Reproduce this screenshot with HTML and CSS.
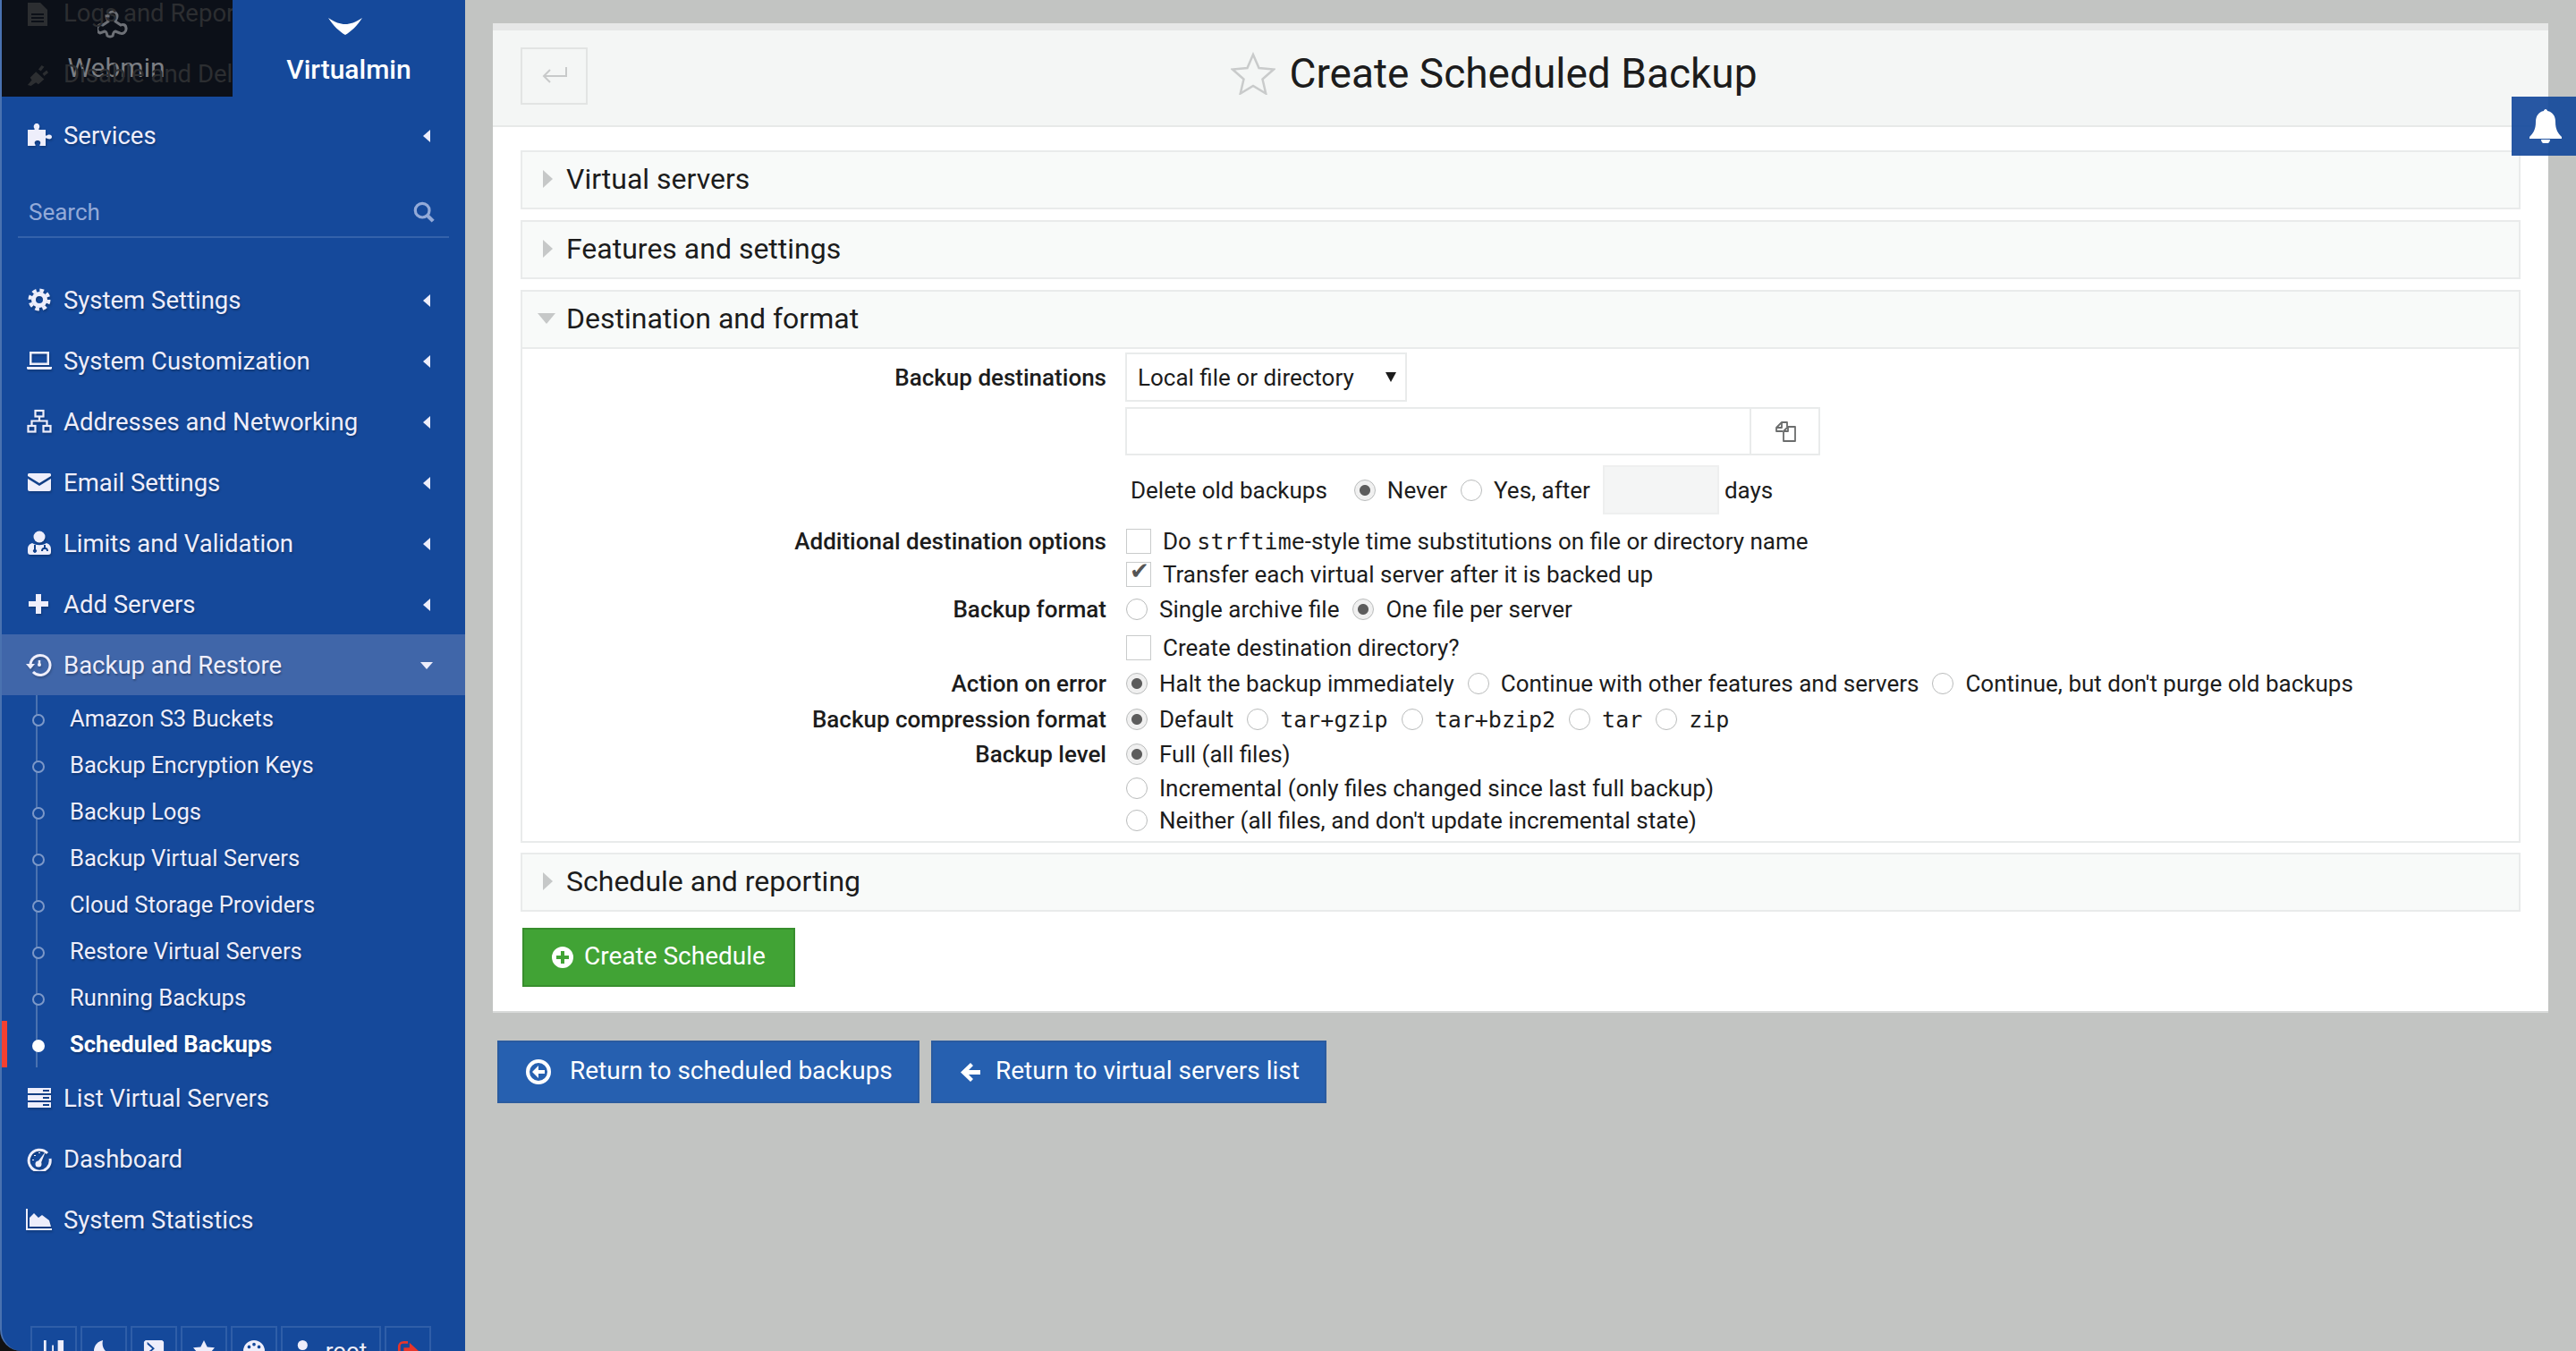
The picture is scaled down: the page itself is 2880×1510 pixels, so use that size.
FILE: index.html
```html
<!DOCTYPE html>
<html lang="en">
<head>
    <meta charset="UTF-8">
    <meta name="viewport" content="width=device-width, initial-scale=1.0">
    <title>Create Scheduled Backup</title>
    <link rel="stylesheet" href="styles.css">
</head>
<body>
    <aside class="sidebar">
        <div class="tabs">
            <div class="tab tab-off">
                <span class="ghost ghost-one">Logs and Reports</span>
                <span class="ghost ghost-two">Disable and Delete</span>
                <svg class="ghost-ico ghost-ico-one" viewBox="0 0 22 26"><path d="M0 0h14l8 8v18H0zM4 12v2h14v-2zM4 16v2h14v-2zM4 20v2h14v-2z" fill-rule="evenodd"/></svg>
                <svg class="ghost-ico ghost-ico-two" viewBox="0 0 26 26"><path d="M1 25l5-6-2-3 7-7 10 9-7 6-3-2-6 4zM14 6l4-5 3 2-4 5zM19 11l5-4 2 3-5 4z"/></svg>
                <svg class="tab-ico" viewBox="0 0 34 34" fill="none" stroke="currentColor" stroke-width="3"><path d="M12 7a5 5 0 0 1 10 0c0 3-2 4-2 6l6 4c2-1 6-1 6 4a5 5 0 0 1-7 5l-5-2c-2 0-3 5-3 5s-1 1-3 1-3-1-3-1-1-5-3-5l-5 2a5 5 0 0 1-1-9c2-1 3 0 4 0l6-4c0-2-2-3-2-6z"/></svg>
                <span>Webmin</span>
            </div>
            <div class="tab tab-on">
                <svg class="tab-mark" viewBox="0 0 38 20"><path d="M0 0c8 5 13 7 19 7s11-2 19-7C32 9 26 15 19 19 12 15 6 9 0 0z"/></svg>
                <span>Virtualmin</span>
            </div>
        </div>

        <a class="nav-row nav-services">
            <svg class="ico" viewBox="0 0 28 28"><path d="M1 8h7c1 0 1-1 0-2-1-3 1-5 3-5s4 2 3 5c-1 1-1 2 0 2h7v6c0 1 1 1 2 0 3-1 5 0 5 2s-2 3-5 2c-1-1-2-1-2 0v8h-6c-1 0-1-1 0-2 1-3-1-4-3-4s-4 1-3 4c1 1 1 2 0 2H1z"/></svg>
            <span class="nav-text">Services</span><i class="caret"></i>
        </a>

        <div class="search">
            <span>Search</span>
            <svg class="search-ico" viewBox="0 0 26 26" fill="none" stroke="currentColor"><circle cx="11" cy="11" r="8.500" stroke-width="3.500"/><path d="M17 17l7 7" stroke-width="4.500"/></svg>
        </div>

        <nav class="nav">
            <a class="nav-row">
                <svg class="ico" viewBox="0 0 28 28" fill="none" stroke="currentColor"><circle cx="14" cy="14" r="6.500" stroke-width="5"/><circle cx="14" cy="14" r="10.500" stroke-width="4" stroke-dasharray="4.600 3.650"/></svg>
                <span class="nav-text">System Settings</span><i class="caret"></i>
            </a>
            <a class="nav-row">
                <svg class="ico" viewBox="0 0 28 28"><path d="M3 4h22v15H3zM5.500 6.500v10h17v-10zM0 21h28v2l-1 1H1l-1-1z" fill-rule="evenodd"/></svg>
                <span class="nav-text">System Customization</span><i class="caret"></i>
            </a>
            <a class="nav-row">
                <svg class="ico" viewBox="0 0 28 28" fill="none" stroke="currentColor" stroke-width="2.200"><rect x="9.500" y="2" width="9" height="6.500"/><rect x="1.500" y="19" width="8" height="6.500"/><rect x="18.500" y="19" width="8" height="6.500"/><path d="M14 8.500v5M5.500 19v-5.500h17V19"/></svg>
                <span class="nav-text">Addresses and Networking</span><i class="caret"></i>
            </a>
            <a class="nav-row">
                <svg class="ico" viewBox="0 0 28 28"><path d="M3 4h22a2 2 0 0 1 2 1v2l-13 8L1 7V5a2 2 0 0 1 2-1zM1 10l13 8 13-8v12a2 2 0 0 1-2 2H3a2 2 0 0 1-2-2z"/></svg>
                <span class="nav-text">Email Settings</span><i class="caret"></i>
            </a>
            <a class="nav-row">
                <svg class="ico" viewBox="0 0 28 28"><circle cx="14" cy="7" r="6.500"/><path d="M6 14c5 3 11 3 16 0 3 1 5 3 5 7v3c0 2-1 3-3 3H4c-2 0-3-1-3-3v-3c0-4 2-6 5-7zM8 16v5a2 2 0 1 0 2 0v-5zM19 16v3c-2 0-3 2-3 4h2c0-2 1-2 2-2s2 0 2 2h2c0-2-1-4-3-4v-3z" fill-rule="evenodd"/></svg>
                <span class="nav-text">Limits and Validation</span><i class="caret"></i>
            </a>
            <a class="nav-row">
                <svg class="ico" viewBox="0 0 28 28"><path d="M10 3h6v8h8v6h-8v8h-6v-8H2v-6h8z"/></svg>
                <span class="nav-text">Add Servers</span><i class="caret"></i>
            </a>
            <a class="nav-row nav-open">
                <svg class="ico ico-wide" viewBox="0 0 30 28" fill="none" stroke="currentColor" stroke-width="3"><path d="M6 14a11 11 0 1 1 3 8"/><path d="M1 13h10l-5 6z" fill="currentColor" stroke="none"/><path d="M16 9v6" stroke-width="2.500"/><circle cx="16" cy="14" r="2" fill="currentColor" stroke="none"/></svg>
                <span class="nav-text">Backup and Restore</span><i class="caret-down"></i>
            </a>
            <ul class="subnav">
                <li>Amazon S3 Buckets</li>
                <li>Backup Encryption Keys</li>
                <li>Backup Logs</li>
                <li>Backup Virtual Servers</li>
                <li>Cloud Storage Providers</li>
                <li>Restore Virtual Servers</li>
                <li>Running Backups</li>
                <li class="sub-active">Scheduled Backups</li>
            </ul>
            <a class="nav-row">
                <svg class="ico" viewBox="0 0 28 28"><path d="M1 3h26v6H1zM18 5v2h7V5zM1 11h26v6H1zM18 13v2h7v-2zM1 19h26v6H1zM18 21v2h7v-2z" fill-rule="evenodd"/></svg>
                <span class="nav-text">List Virtual Servers</span>
            </a>
            <a class="nav-row">
                <svg class="ico" viewBox="0 0 28 28" fill="none" stroke="currentColor"><path d="M23 8a12 12 0 1 0 3 6" stroke-width="3"/><path d="M11 19l10-13-6 15z" fill="currentColor" stroke="none"/><circle cx="13" cy="20" r="3.500" fill="currentColor" stroke="none"/><path d="M7 15v1M9 10v1M14 7v1" stroke-width="2"/></svg>
                <span class="nav-text">Dashboard</span>
            </a>
            <a class="nav-row">
                <svg class="ico ico-wide" viewBox="0 0 30 28"><path d="M1 2h2v22h27v2H1zM5 22V12l5-5 5 5 4-3 8 6 2 7z"/></svg>
                <span class="nav-text">System Statistics</span>
            </a>
        </nav>

        <div class="toolbar">
            <span class="tool"><svg class="tool-ico" viewBox="0 0 26 26"><path d="M1 0h3v26H1zM18 0h7v26h-7zM13 6v8l-5 3 5 3v6h-2V6z"/></svg></span>
            <span class="tool"><svg class="tool-ico" viewBox="0 0 26 26"><path d="M12 0A13 13 0 1 0 26 18C19 19 9 10 12 0z"/></svg></span>
            <span class="tool"><svg class="tool-ico" viewBox="0 0 26 26"><path d="M3 0h20l2 2v24H1V2zM5 5l6 5-6 5v3l9-8-9-8zM13 16v3h8v-3z" fill-rule="evenodd"/></svg></span>
            <span class="tool"><svg class="tool-ico" viewBox="0 0 26 26"><path d="M13 0l4 8 9 1-6 7 2 9-9-4-9 4 2-9-6-7 9-1z"/></svg></span>
            <span class="tool"><svg class="tool-ico" viewBox="0 0 26 26"><path d="M13 0a13 13 0 1 0 0 26A13 13 0 0 0 13 0zM7 6a2 2 0 1 1 0 4 2 2 0 0 1 0-4zM13 3a2 2 0 1 1 0 4 2 2 0 0 1 0-4zM19 6a2 2 0 1 1 0 4 2 2 0 0 1 0-4z" fill-rule="evenodd"/></svg></span>
            <span class="tool tool-user"><svg class="tool-ico" viewBox="0 0 26 26"><circle cx="9" cy="6" r="6"/><path d="M0 26v-6c0-4 3-6 5-6 3 2 5 2 8 0l3 2-2 4 2 6z"/><circle cx="21" cy="21" r="5"/></svg>root</span>
            <span class="tool tool-exit"><svg class="tool-ico" viewBox="0 0 26 26"><path d="M8 1h5v3H7C5 4 4 5 4 7v12c0 2 1 3 3 3h6v3H8c-4 0-7-3-7-7V8c0-4 3-7 7-7zM15 3l11 10-11 10v-6H8V9h7z"/></svg></span>
        </div>
    </aside>

    <main class="main">
        <div class="panel">
            <header class="panel-head">
                <a class="back-btn">
                    <svg viewBox="0 0 28 22" fill="none" stroke="currentColor" stroke-width="2"><path d="M27 1v10H3M9 4l-7 7 7 7"/></svg>
                </a>
                <h1 class="title">
                    <svg class="star" viewBox="0 0 50 48" fill="none" stroke="currentColor" stroke-width="2.500"><path d="M25 3l6.500 15 16.500 1.500-12.500 11 3.700 16L25 38l-14.200 8.500 3.700-16L2 19.500 18.500 18z"/></svg>
                    Create Scheduled Backup
                </h1>
            </header>

            <div class="panel-body">
                <section class="box">
                    <div class="box-head"><i class="tri-right"></i>Virtual servers</div>
                </section>
                <section class="box">
                    <div class="box-head"><i class="tri-right"></i>Features and settings</div>
                </section>
                <section class="box box-open">
                    <div class="box-head box-head-open"><i class="tri-down"></i>Destination and format</div>
                    <div class="form">
                        <div class="row row-select">
                            <label>Backup destinations</label>
                            <div class="val"><div class="select">Local file or directory</div></div>
                        </div>
                        <div class="row row-path mt6">
                            <label></label>
                            <div class="val"><input class="path" type="text"><span class="path-btn"><svg viewBox="0 0 24 24" fill="none" stroke="currentColor" stroke-width="1.800" stroke-linejoin="round"><path d="M9 12H2V8l6-6h6v5"/><path d="M8 2v6H2"/><path d="M15 7h8v16H10V12z"/><path d="M15 7v5h-5"/></svg></span></div>
                        </div>
                        <div class="row row-select mt11">
                            <label></label>
                            <div class="val val-delete">
                                <span class="delete-text">Delete old backups</span>
                                <input class="radio" type="radio" name="del" checked><span class="opt opt-never">Never</span>
                                <input class="radio" type="radio" name="del"><span class="opt opt-yes">Yes, after</span>
                                <input class="days" type="text"><span>days</span>
                            </div>
                        </div>
                        <div class="row mt12">
                            <label>Additional destination options</label>
                            <div class="val"><input class="check" type="checkbox"><span>Do <code>strftime</code>-style time substitutions on file or directory name</span></div>
                        </div>
                        <div class="row mt1">
                            <label></label>
                            <div class="val"><input class="check" type="checkbox" checked><span>Transfer each virtual server after it is backed up</span></div>
                        </div>
                        <div class="row mt3">
                            <label>Backup format</label>
                            <div class="val">
                                <input class="radio" type="radio" name="fmt"><span class="opt">Single archive file</span>
                                <input class="radio" type="radio" name="fmt" checked><span class="opt">One file per server</span>
                            </div>
                        </div>
                        <div class="row mt7">
                            <label></label>
                            <div class="val"><input class="check" type="checkbox"><span>Create destination directory?</span></div>
                        </div>
                        <div class="row mt4">
                            <label>Action on error</label>
                            <div class="val">
                                <input class="radio" type="radio" name="err" checked><span class="opt">Halt the backup immediately</span>
                                <input class="radio" type="radio" name="err"><span class="opt">Continue with other features and servers</span>
                                <input class="radio" type="radio" name="err"><span class="opt">Continue, but don't purge old backups</span>
                            </div>
                        </div>
                        <div class="row mt4">
                            <label>Backup compression format</label>
                            <div class="val">
                                <input class="radio" type="radio" name="cmp" checked><span class="opt">Default</span>
                                <input class="radio" type="radio" name="cmp"><code class="opt">tar+gzip</code>
                                <input class="radio" type="radio" name="cmp"><code class="opt">tar+bzip2</code>
                                <input class="radio" type="radio" name="cmp"><code class="opt">tar</code>
                                <input class="radio" type="radio" name="cmp"><code class="opt">zip</code>
                            </div>
                        </div>
                        <div class="row mt3">
                            <label>Backup level</label>
                            <div class="val"><input class="radio" type="radio" name="lvl" checked><span class="opt">Full (all files)</span></div>
                        </div>
                        <div class="row mt2">
                            <label></label>
                            <div class="val"><input class="radio" type="radio" name="lvl"><span class="opt">Incremental (only files changed since last full backup)</span></div>
                        </div>
                        <div class="row">
                            <label></label>
                            <div class="val"><input class="radio" type="radio" name="lvl"><span class="opt">Neither (all files, and don't update incremental state)</span></div>
                        </div>
                    </div>
                </section>
                <section class="box">
                    <div class="box-head"><i class="tri-right"></i>Schedule and reporting</div>
                </section>
                <button class="btn btn-create">
                    <svg viewBox="0 0 24 24"><path d="M12 0a12 12 0 1 0 0 24 12 12 0 0 0 0-24zM10 5h4v5h5v4h-5v5h-4v-5H5v-4h5z" fill-rule="evenodd"/></svg>
                    <span class="btn-label">Create Schedule</span>
                </button>
            </div>
        </div>

        <div class="returns">
            <button class="btn btn-return">
                <svg viewBox="0 0 28 28"><path d="M14 0a14 14 0 1 0 0 28 14 14 0 0 0 0-28zM14 4a10 10 0 1 1 0 20 10 10 0 0 1 0-20zM14 7l-7 7 7 7v-5h7v-4h-7z" fill-rule="evenodd"/></svg>
                <span class="btn-label">Return to scheduled backups</span>
            </button>
            <button class="btn btn-return btn-return-list">
                <svg viewBox="0 0 24 24"><path d="M12 2l3 3-5 5h13v5H10l5 5-3 3L1 12.500z"/></svg>
                <span class="btn-label">Return to virtual servers list</span>
            </button>
        </div>
    </main>

    <div class="bell">
        <svg viewBox="0 0 36 38"><path d="M18 0c1 0 2 1 2 2 6 1 9 6 9 12 0 9 3 13 7 17v2H0v-2c4-4 7-8 7-17 0-6 3-11 9-12 0-1 1-2 2-2zM13 34h10a5 5 0 0 1-10 0z"/></svg>
    </div>
</body>
</html>
```

FILE: styles.css
```css
* {
    box-sizing: border-box;
}

html, body {
    height: 100%;
}

body {
    margin: 0;
    height: 1510px;
    overflow: hidden;
    display: flex;
    background-color: #c2c4c2;
    color: #1c1c1c;
    font: 26px Roboto, "Liberation Sans", sans-serif;
}

svg {
    display: block;
}

svg:not([fill]) {
    fill: currentColor;
}

code {
    font-family: "DejaVu Sans Mono", "Liberation Mono", monospace;
    font-size: 25px;
}

/* Sidebar */
.sidebar {
    flex: 0 0 520px;
    height: 1510px;
    display: flex;
    flex-direction: column;
    overflow: hidden;
    background-color: #15499b;
    border-left: 2px solid #4a72b0;
    border-bottom-left-radius: 24px;
    box-shadow: -20px 20px 0 #111;
    color: #eeeefb;
    text-shadow: 1px 2px 2px rgba(0, 0, 0, 0.25);
}

.tabs {
    display: flex;
    height: 108px;
    margin-left: -2px;
    margin-bottom: 9px;
    flex: none;
}

.tab {
    position: relative;
    width: 260px;
    display: flex;
    flex-direction: column;
    align-items: center;
    font-size: 30px;
    text-shadow: none;
}

.tab-off {
    overflow: hidden;
    background-color: #0c1018;
    color: #6d7076;
    padding-top: 11px;
}

.tab-off > span:last-child {
    margin-top: 13px;
    color: #7c7f84;
}

.tab-on {
    padding-top: 20px;
    color: #fff;
    font-weight: 500;
}

.tab-mark {
    width: 38px;
    height: 20px;
    margin-bottom: 20px;
    margin-right: 8px;
}

.tab-ico {
    width: 34px;
    height: 34px;
    margin-right: 8px;
    color: #6d7076;
}

/* text scrolled under the dark tab */
.ghost {
    position: absolute;
    left: 71px;
    white-space: nowrap;
    font-size: 27.500px;
    color: #2c2e31;
}

.ghost-one {
    top: -2px;
}

.ghost-two {
    top: 66px;
}

.ghost-ico {
    position: absolute;
    left: 30px;
    width: 24px;
    height: 26px;
    color: #2c2e31;
}

.ghost-ico-one {
    top: 3px;
}

.ghost-ico-two {
    top: 71px;
}

.nav-row {
    position: relative;
    display: flex;
    align-items: center;
    height: 68px;
    padding-left: 28px;
    font-size: 27.500px;
    flex: none;
}

.ico {
    flex: none;
    width: 28px;
    height: 28px;
    filter: drop-shadow(1px 2px 1px rgba(0, 0, 0, 0.2));
}

.ico-wide {
    width: 30px;
    margin-left: -2px;
}

.nav-text {
    margin-left: 13px;
}

.caret {
    position: absolute;
    left: 471px;
    top: 28px;
    border-style: solid;
    border-width: 7px 8px 7px 0;
    border-color: transparent #eeeefb transparent transparent;
}

.caret-down {
    position: absolute;
    left: 470px;
    top: 31px;
    border-style: solid;
    border-width: 8px 7px 0;
    border-color: #eeeefb transparent transparent;
}

.search {
    display: flex;
    align-items: center;
    justify-content: space-between;
    height: 81px;
    margin-left: 18px;
    margin-right: 18px;
    padding: 25px 16px 0 12px;
    border-bottom: 2px solid #3462ab;
    color: #93aad8;
    text-shadow: none;
    flex: none;
}

.search-ico {
    width: 24px;
    height: 26px;
}

.nav {
    margin-top: 35px;
}

.nav-open {
    background-color: #4066a9;
    margin-left: -2px;
    padding-left: 30px;
}

.subnav {
    position: relative;
    list-style: none;
    margin: 0 0 0 -2px;
    padding: 0;
    font-size: 25.600px;
}

.subnav li {
    position: relative;
    height: 52px;
    line-height: 52px;
    padding-left: 78px;
}

/* tree line */
.subnav li::before {
    content: "";
    position: absolute;
    left: 40px;
    top: 0;
    bottom: 0;
    width: 2px;
    background-color: #4a72b0;
}

/* tree dot */
.subnav li::after {
    content: "";
    position: absolute;
    left: 36px;
    top: 21px;
    width: 10px;
    height: 10px;
    border-radius: 50%;
    border: 2px solid #7c98c8;
    background-color: #15499b;
}

.sub-active {
    color: #fff;
    font-weight: 700;
    box-shadow: inset 8px 0 0 #f44030;
}

.subnav .sub-active::after {
    border-color: #fff;
    background-color: #fff;
}

.toolbar {
    display: flex;
    gap: 4px;
    margin-top: auto;
    margin-left: 32px;
    height: 28px;
    flex: none;
}

.tool {
    display: flex;
    align-items: flex-start;
    justify-content: center;
    gap: 10px;
    flex: none;
    width: 52px;
    height: 60px;
    padding-top: 13px;
    border: 2px solid #2f5ea8;
    font-size: 26px;
    line-height: 26px;
}

.tool-user {
    width: 112px;
}

.tool-ico {
    width: 24px;
    height: 26px;
    flex: none;
}

.tool-exit {
    color: #e7352a;
}

/* Main column */
.main {
    flex: 1;
    min-width: 0;
    padding: 26px 31px 0;
}

.panel {
    height: 1106px;
    background-color: #fff;
    border-top: 8px solid #e6e7e7;
    border-bottom: 2px solid #d9dbda;
}

.panel-head {
    display: flex;
    align-items: center;
    height: 108px;
    padding: 0 31px;
    background-color: #f4f6f5;
    border-bottom: 2px solid #e7e9e8;
}

.back-btn {
    display: flex;
    align-items: center;
    justify-content: center;
    flex: none;
    width: 75px;
    height: 64px;
    margin-bottom: 4px;
    border: 2px solid #e2e4e3;
    color: #c8caca;
}

.back-btn svg {
    width: 28px;
    height: 22px;
}

.title {
    display: flex;
    align-items: center;
    justify-content: center;
    flex: 1;
    gap: 16px;
    margin: 0 0 10px;
    padding-right: 135px;
    font-size: 46px;
    font-weight: 400;
    color: #1c1c1c;
}

.star {
    width: 50px;
    height: 48px;
    color: #c9cbcb;
}

.panel-body {
    padding: 26px 31px 0;
}

.box {
    margin-bottom: 12px;
    border: 2px solid #e9ebeb;
}

.box-open {
    margin-bottom: 11px;
}

.box-head {
    display: flex;
    align-items: center;
    height: 62px;
    background-color: #f8faf9;
    font-size: 32px;
    padding: 0 0 3px 49px;
    position: relative;
}

.box-head-open {
    height: 64px;
    border-bottom: 2px solid #e9ebeb;
}

.tri-right {
    position: absolute;
    left: 23px;
    top: 20px;
    border-style: solid;
    border-width: 10px 0 10px 11px;
    border-color: transparent transparent transparent #c6c8c8;
}

.tri-down {
    position: absolute;
    left: 17px;
    top: 24px;
    border-style: solid;
    border-width: 12px 10px 0;
    border-color: #c6c8c8 transparent transparent;
}

/* Form rows */
.form {
    padding: 4px 0 5px;
}

.row {
    display: flex;
    align-items: center;
    height: 36px;
}

.row label {
    flex: 0 0 653px;
    text-align: right;
    font-weight: 500;
    color: #1c1c1c;
}

.val {
    display: flex;
    align-items: center;
    margin-left: 21px;
    white-space: nowrap;
}

.row-select {
    height: 55px;
}

.row-path {
    height: 54px;
}

.mt1 { margin-top: 1px; }
.mt2 { margin-top: 2px; }
.mt3 { margin-top: 3px; }
.mt4 { margin-top: 4px; }
.mt6 { margin-top: 6px; }
.mt7 { margin-top: 7px; }
.mt11 { margin-top: 11px; }
.mt12 { margin-top: 12px; }

.select {
    position: relative;
    width: 315px;
    height: 55px;
    line-height: 52px;
    padding-left: 12px;
    border: 2px solid #e9ebeb;
}

.select::after {
    content: "";
    position: absolute;
    right: 10px;
    top: 20px;
    border-style: solid;
    border-width: 11px 6px 0;
    border-color: #1c1c1c transparent transparent;
}

.path {
    width: 700px;
    height: 54px;
    margin: 0;
    border: 2px solid #e9ebeb;
    background-color: #fff;
}

.path-btn {
    display: flex;
    align-items: center;
    justify-content: center;
    width: 79px;
    height: 54px;
    margin-left: -2px;
    border: 2px solid #e9ebeb;
    color: #6b6d6d;
}

.path-btn svg {
    width: 24px;
    height: 24px;
}

.delete-text {
    margin-left: 6px;
    margin-right: 29px;
}

.opt-never {
    margin-right: 12px;
}

.opt-yes {
    margin-right: 10px;
}

.days {
    width: 130px;
    height: 55px;
    margin: 0 6px 0 0;
    border: 2px solid #eeefef;
    background-color: #f4f5f5;
}

.radio {
    appearance: none;
    flex: none;
    width: 24px;
    height: 24px;
    margin: 0 13px 0 1px;
    border: 1px solid #b9bbbb;
    border-radius: 50%;
    background-color: #fff;
}

.radio:checked {
    background: radial-gradient(circle, #5c5c5c 0, #5c5c5c 5.500px, #f0f0f0 6.500px);
}

.opt {
    margin-right: 14px;
}

code.opt {
    margin-right: 14px;
}

.check {
    appearance: none;
    position: relative;
    flex: none;
    width: 28px;
    height: 28px;
    margin: 0 13px 0 1px;
    border: 1px solid #c9cbcb;
    background-color: #fff;
}

.check:checked::after {
    content: "\2714";
    position: absolute;
    left: 3px;
    top: -6px;
    font: 26px "DejaVu Sans", sans-serif;
    color: #555;
}

/* Buttons */
.btn {
    display: flex;
    align-items: center;
    font: 28px Roboto, "Liberation Sans", sans-serif;
    color: #fff;
    cursor: pointer;
}

.btn-label {
    margin-bottom: 3px;
}

.btn-create {
    width: 305px;
    height: 66px;
    margin: 18px 0 0 2px;
    padding: 0 0 0 31px;
    gap: 12px;
    background-color: #41a335;
    border: 2px solid #388e2d;
}

.btn-create svg {
    width: 24px;
    height: 24px;
}

.returns {
    display: flex;
    gap: 13px;
    margin: 31px 0 0 5px;
}

.btn-return {
    width: 472px;
    height: 70px;
    padding: 0 0 0 30px;
    gap: 21px;
    background-color: #2660b0;
    border: 2px solid #2a5b9f;
}

.btn-return svg {
    width: 28px;
    height: 28px;
}

.btn-return-list {
    width: 442px;
    gap: 16px;
}

.btn-return-list svg {
    width: 24px;
    height: 24px;
}

.bell {
    position: absolute;
    top: 108px;
    left: 2808px;
    width: 72px;
    height: 66px;
    display: flex;
    align-items: center;
    justify-content: center;
    padding-left: 4px;
    background-color: rgba(21, 73, 155, 0.92);
    color: #fff;
}

.bell svg {
    width: 36px;
    height: 38px;
}
```
